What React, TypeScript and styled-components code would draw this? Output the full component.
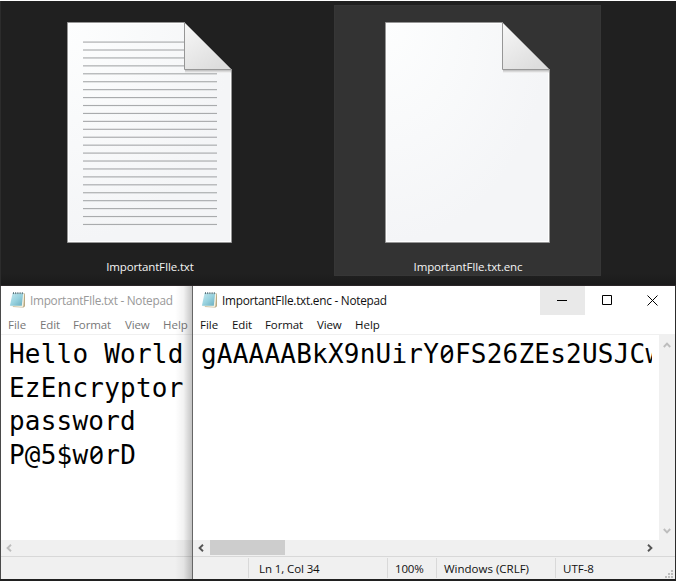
import React from 'react';
import styled, { createGlobalStyle } from 'styled-components';

const GlobalStyle = createGlobalStyle`
  * { box-sizing: border-box; }
  body { margin: 0; background: #202020; }
`;

const Desktop = styled.div`
  width: 676px;
  height: 581px;
  display: flex;
  flex-direction: column;
  overflow: hidden;
  background: #202020;
  border-top: 1px solid #fff;
  font-family: 'Open Sans', 'Noto Sans', sans-serif;
  font-size: 12px;
`;

const Explorer = styled.div`
  height: 285px;
  flex: none;
  display: flex;
  gap: 51px;
  padding: 4px 0 0 15px;
  border-left: 1px solid #2c2c2c;
  background: linear-gradient(#202020 272px, #1a1a1a 284px, #2b2628 284px);
`;

const FileTile = styled.div<{ $selected?: boolean }>`
  width: 267px;
  height: 271px;
  display: flex;
  flex-direction: column;
  align-items: center;
  padding-top: 16px;
  background: ${p => (p.$selected ? '#333333' : 'transparent')};
  box-shadow: ${p => (p.$selected ? 'inset 0 0 0 1px #363636' : 'none')};
`;

const Spaced = styled.span<{ $track?: number }>`
  letter-spacing: ${p => p.$track ?? 0}px;
  white-space: pre;
`;

const FileName = styled(Spaced)`
  margin: 14px 0 0 1px;
  line-height: 18px;
  font-size: 11.5px;
  color: #f4f4f4;
`;

const Windows = styled.div`
  display: flex;
  height: 293px;
  flex: none;
`;

const Window = styled.section<{ $active?: boolean }>`
  display: flex;
  flex-direction: column;
  flex: none;
  width: ${p => (p.$active ? 484 : 192)}px;
  border-left: 1px solid ${p => (p.$active ? '#666' : '#4a4a4a')};
  border-right: ${p => (p.$active ? '1px solid #2c2c2c' : 'none')};
  background: #fff;
  color: ${p => (p.$active ? '#111' : '#777')};
  position: relative;
  overflow: hidden;
`;

const EdgeShadow = styled.div`
  position: absolute;
  top: 0;
  right: 0;
  bottom: 0;
  width: 17px;
  background: linear-gradient(90deg, rgba(0,0,0,0), rgba(0,0,0,.05) 50%, rgba(0,0,0,.23));
`;

const TitleBar = styled.header`
  height: 29px;
  flex: none;
  display: flex;
  align-items: flex-start;
  padding-left: 8px;
`;

const Title = styled(Spaced)<{ $active?: boolean }>`
  flex: 1;
  margin-left: 4px;
  line-height: 29px;
  color: ${p => (p.$active ? '#111' : '#999')};
  font-size: 11.8px;
`;

const Caption = styled.div<{ $hover?: boolean }>`
  width: 45px;
  height: 29px;
  display: flex;
  align-items: center;
  justify-content: center;
  background: ${p => (p.$hover ? '#e9e9e9' : 'transparent')};
`;

const MenuBar = styled.nav`
  height: 20px;
  flex: none;
  display: grid;
  grid-template-columns: 32px 33px 52px 38px 40px;
  padding-left: 7px;
  line-height: 20px;
  font-size: 11.5px;
  border-bottom: 1px solid #f0f0f0;
`;

const Body = styled.div`
  flex: 1;
  display: flex;
  min-height: 0;
`;

const Editor = styled.div<{ $clip?: number }>`
  flex: 1;
  margin: 3px ${p => p.$clip ?? 0}px 0 8px;
  overflow: hidden;
  white-space: pre;
  color: #000;
  font-family: 'DejaVu Sans Mono', monospace;
  font-size: 26px;
  line-height: 33.7px;
  letter-spacing: 0.22px;
`;

const Line = styled.div`
  height: 33.7px;
`;

const SlashedZero = styled.span`
  display: inline-block;
  width: 15.9px;
  text-align: center;
  letter-spacing: 0;
  line-height: 1;
  font-family: 'Noto Sans', sans-serif;
  font-feature-settings: 'zero' 1;
`;

const VerticalBar = styled.div`
  width: 16px;
  display: flex;
  flex-direction: column;
  justify-content: space-between;
  align-items: center;
  padding: 6px 1px 5px 0;
  background: #f0f0f0;
`;

const HorizontalBar = styled.div`
  height: 16px;
  flex: none;
  display: flex;
  align-items: center;
  justify-content: space-between;
  padding: 0 21px 0 4px;
  background: #f0f0f0;
`;

const ScrollStart = styled.div`
  display: flex;
  align-items: center;
  gap: 5px;
`;

const Thumb = styled.div`
  width: 75px;
  height: 15px;
  margin-bottom: 1px;
  background: #cdcdcd;
`;

const StatusBar = styled.footer`
  height: 23px;
  flex: none;
  display: flex;
  justify-content: flex-end;
  padding-top: 1px;
  border-top: 1px solid #d8d8d8;
  background: #f0f0f0;
  font-size: 11.5px;
`;

const StatusCell = styled.div<{ $width: number; $inset: number }>`
  width: ${p => p.$width}px;
  height: 20px;
  display: flex;
  justify-content: space-between;
  padding-left: ${p => p.$inset}px;
  border-left: 1px solid #d9d9d9;
  line-height: 22px;
`;

const Grip = styled.svg`
  align-self: flex-end;
  margin-right: 2px;
`;

const Chevron = ({ dir, color }: { dir: 'up' | 'down' | 'left' | 'right'; color: string }) => {
  const angle = { left: 0, up: 90, right: 180, down: 270 }[dir];
  return (
    <svg width="8" height="8" viewBox="0 0 8 8">
      <path d="M6 .8 2.6 4 6 7.2" fill="none" stroke={color} strokeWidth="1.9" transform={`rotate(${angle} 4 4)`} />
    </svg>
  );
};

const NotepadIcon = () => (
  <svg width="17" height="18" viewBox="0 0 17 18">
    <defs>
      <linearGradient id="pad" x1="0" y1="0" x2="1" y2="1">
        <stop offset="0" stopColor="#c4e8ee" />
        <stop offset=".5" stopColor="#98d2df" />
        <stop offset="1" stopColor="#69adbf" />
      </linearGradient>
    </defs>
    <path d="M14 2.5h2v12.8l-1.5 1.2-11-.5z" fill="#b9a983" />
    <path d="M4 2.5h11.2l-.8 12.8-1 .7L2 15.3z" fill="#f5f2e2" />
    <path d="M3.5 2.5h10.6L12.8 14.8H.9z" fill="url(#pad)" />
    <path d="M3.5 2.5h11.2" stroke="#b7d3d8" />
    <path d="M4.5 1.2v1.9M6.7 1.2v1.9M8.9 1.2v1.9M11.1 1.2v1.9M13.3 1.2v1.9" stroke="#56727b" />
  </svg>
);

const IconSlot = styled.div`
  width: 17px;
  height: 18px;
  margin-top: 5px;
`;

const DocumentIcon = ({ lined }: { lined?: boolean }) => {
  const id = lined ? 'lined' : 'blank';
  return (
    <svg width="167" height="223" viewBox="0 0 167 223">
      <defs>
        <radialGradient id={`page-${id}`} cx="0" cy="0" r="1">
          <stop offset="0" stopColor="#fdfefe" />
          <stop offset="1" stopColor="#f4f5f7" />
        </radialGradient>
        <linearGradient id={`fold-${id}`} x1="0" y1="0" x2=".65" y2="1">
          <stop offset="0" stopColor="#f8f8f8" />
          <stop offset="1" stopColor="#dddddd" />
        </linearGradient>
        <linearGradient id={`shade-${id}`} x1="0" y1="0" x2="0" y2="1">
          <stop offset="0" stopColor="#bbb" />
          <stop offset="1" stopColor="#f7f7f8" />
        </linearGradient>
      </defs>
      <path d="M1.5 1.5H118.5L165.5 48.5V221.5H1.5Z" fill={`url(#page-${id})`} stroke="#969696" />
      <path d="M117 2.5H2.5V220.5H164.5V50" fill="none" stroke="#fff" />
      {lined &&
        Array.from({ length: 24 }, (_, i) => (
          <rect key={i} x="17" y={20.5 + i * 7.93} width={i < 4 ? 101 : 134} height="1.15" fill="#a9abad" />
        ))}
      <path d="M119 49H165V52H119Z" fill={`url(#shade-${id})`} />
      <path d="M118.5 1.5V48.5H165.5Z" fill={`url(#fold-${id})`} stroke="#969696" />
    </svg>
  );
};

const Menu = () => (
  <MenuBar>
    <Spaced>File</Spaced>
    <Spaced $track={-0.1}>Edit</Spaced>
    <Spaced $track={-0.1}>Format</Spaced>
    <Spaced $track={-0.15}>View</Spaced>
    <Spaced>Help</Spaced>
  </MenuBar>
);

export default function App() {
  return (
    <>
      <GlobalStyle />
      <Desktop>
        <Explorer>
          <FileTile>
            <DocumentIcon lined />
            <FileName $track={-0.15}>ImportantFIle.txt</FileName>
          </FileTile>
          <FileTile $selected>
            <DocumentIcon />
            <FileName $track={-0.15}>ImportantFIle.txt.enc</FileName>
          </FileTile>
        </Explorer>
        <Windows>
          <Window>
            <TitleBar>
              <IconSlot><NotepadIcon /></IconSlot>
              <Title $track={-0.27}>ImportantFIle.txt - Notepad</Title>
            </TitleBar>
            <Menu />
            <Body>
              <Editor>
                <Line>Hello World</Line>
                <Line>EzEncryptor</Line>
                <Line>password</Line>
                <Line>P@5$w<SlashedZero>0</SlashedZero>rD</Line>
              </Editor>
            </Body>
            <HorizontalBar><Chevron dir="left" color="#bdbdbd" /></HorizontalBar>
            <StatusBar />
            <EdgeShadow />
          </Window>
          <Window $active>
            <TitleBar>
              <IconSlot><NotepadIcon /></IconSlot>
              <Title $active $track={-0.25}>ImportantFIle.txt.enc - Notepad</Title>
              <Caption $hover>
                <svg width="11" height="11"><path d="M0 5.5h10" stroke="#000" /></svg>
              </Caption>
              <Caption>
                <svg width="11" height="11"><path d="M.5.5h9v9h-9z" fill="none" stroke="#000" /></svg>
              </Caption>
              <Caption>
                <svg width="11" height="11"><path d="M.5.5l10 10M10.5.5l-10 10" stroke="#000" /></svg>
              </Caption>
            </TitleBar>
            <Menu />
            <Body>
              <Editor $clip={7}>
                <Line>gAAAAABkX9nUirY<SlashedZero>0</SlashedZero>FS26ZEs2USJCw</Line>
              </Editor>
              <VerticalBar>
                <Chevron dir="up" color="#bdbdbd" />
                <Chevron dir="down" color="#bdbdbd" />
              </VerticalBar>
            </Body>
            <HorizontalBar>
              <ScrollStart>
                <Chevron dir="left" color="#555" />
                <Thumb />
              </ScrollStart>
              <Chevron dir="right" color="#555" />
            </HorizontalBar>
            <StatusBar>
              <StatusCell $width={139} $inset={10}><Spaced $track={-0.1}>Ln 1, Col 34</Spaced></StatusCell>
              <StatusCell $width={49} $inset={7}><Spaced $track={-0.15}>100%</Spaced></StatusCell>
              <StatusCell $width={119} $inset={7}><Spaced>Windows (CRLF)</Spaced></StatusCell>
              <StatusCell $width={120} $inset={7}>
                <Spaced>UTF-8</Spaced>
                <Grip width="8" height="8">
                  <path d="M6 0h2v2H6zM3 3h2v2H3zM6 3h2v2H6zM0 6h2v2H0zM3 6h2v2H3zM6 6h2v2H6z" fill="#bdbdbd" />
                </Grip>
              </StatusCell>
            </StatusBar>
          </Window>
        </Windows>
      </Desktop>
    </>
  );
}
